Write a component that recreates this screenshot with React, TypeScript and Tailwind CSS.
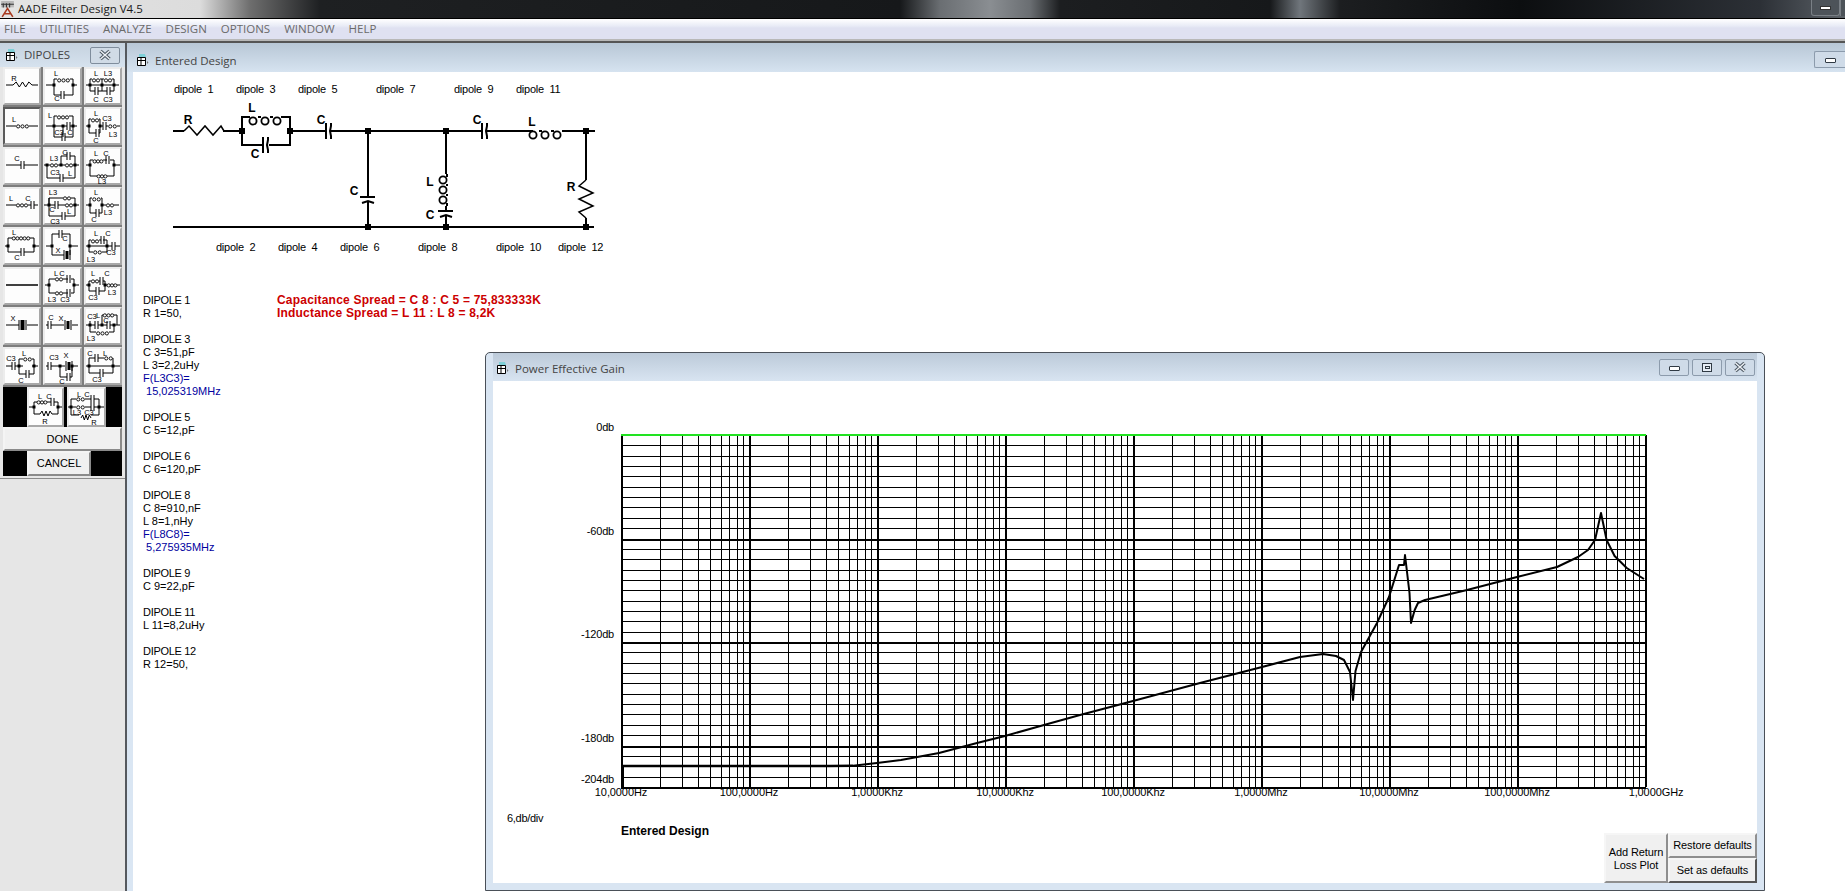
import React from 'react'

const UI = "font-['Open_Sans',sans-serif]"
const SYS = "font-['Liberation_Sans',Arial,sans-serif]"

/* palette symbol primitives, 38x38 box */
const W = ({ d, w = 1 }: { d: string; w?: number }) => <path d={d} fill="none" stroke="#000" strokeWidth={w} />
const Coil = ({ x, y, e }: { x: number; y: number; e: number }) => {
  const n = Math.max(2, Math.round((e - x) / 4))
  const s = (e - x) / n
  return (
    <>
      {Array.from({ length: n }, (_, i) => (
        <circle key={i} cx={x + s / 2 + i * s} cy={y + 1.4} r={1.6} fill="none" stroke="#000" strokeWidth={0.9} />
      ))}
    </>
  )
}
const Cap = ({ x, y }: { x: number; y: number }) => <W d={`M${x - 1} ${y - 4}V${y + 4}M${x + 2} ${y - 4}V${y + 4}`} />
const Dot = ({ x, y }: { x: number; y: number }) => <rect x={x - 1.5} y={y - 1.5} width={3} height={3} fill="#000" />
const Xtal = ({ x, y }: { x: number; y: number }) => (
  <>
    <W d={`M${x - 2} ${y - 5}V${y + 5}M${x + 4} ${y - 5}V${y + 5}`} />
    <rect x={x - 0.5} y={y - 4} width={3} height={8} fill="#000" />
  </>
)
const Zig = ({ x, y, e }: { x: number; y: number; e: number }) => {
  const s = (e - x) / 6
  return <W d={`M${x} ${y}l${s} -3l${s} 5l${s} -5l${s} 5l${s} -5l${s} 3`} />
}
const Lb = ({ x, y, t }: { x: number; y: number; t: string }) => (
  <text x={x} y={y} fontSize="7.5" textAnchor="middle" fontFamily="Liberation Sans" fill="#000">
    {t}
  </text>
)

const symbols: React.ReactNode[] = [
  <>
    <W d="M3 17H10" /><Zig x={10} y={17} e={29} /><W d="M29 17H35" /><Lb x={11} y={13} t="R" />
  </>,
  <>
    <W d="M3 17H11M30 17H34M11 11V27H18M21 27H30V11H27M11 11H14" /><Coil x={14} y={11} e={27} /><Cap x={19} y={27} /><Dot x={11} y={17} /><Dot x={30} y={17} /><Lb x={13} y={8} t="L" /><Lb x={14} y={33} t="C" />
  </>,
  <>
    <W d="M2 17H35M6 17V11H8M16 11H20M28 11H30V17M6 17V23H11M14 23H23M26 23H30V17M18 11V23" /><Coil x={8} y={11} e={16} /><Coil x={20} y={11} e={28} /><Cap x={12} y={23} /><Cap x={24} y={23} /><Dot x={6} y={17} /><Dot x={18} y={17} /><Dot x={30} y={17} /><Lb x={12} y={8} t="L" /><Lb x={24} y={8} t="L3" /><Lb x={12} y={34} t="C" /><Lb x={24} y={34} t="C3" />
  </>,
  <>
    <W d="M3 18H13M26 18H35" /><Coil x={13} y={17} e={26} /><Lb x={11} y={14} t="L" />
  </>,
  <>
    <W d="M3 18H24M27 18H34M11 8V29H19M22 29H30V8H26M11 8H14M20 18V29" /><Coil x={14} y={8} e={26} /><Cap x={25} y={18} /><Cap x={20} y={29} /><Dot x={11} y={18} /><Dot x={20} y={18} /><Dot x={30} y={18} /><Lb x={7} y={10} t="L" /><Lb x={16} y={27} t="C3" /><Lb x={27} y={27} t="C" />
  </>,
  <>
    <W d="M2 18H5M5 11V25H12M15 25H16V11M16 18H19M22 18H24M33 18H36M5 11H7M15 11H16" /><Coil x={7} y={11} e={15} /><Coil x={24} y={17} e={33} /><Cap x={13} y={25} /><Cap x={20} y={18} /><Dot x={5} y={18} /><Dot x={16} y={18} /><Lb x={12} y={8} t="L" /><Lb x={23} y={13} t="C3" /><Lb x={29} y={29} t="L3" /><Lb x={12} y={35} t="C" />
  </>,
  <>
    <W d="M3 17H18M21 17H35" /><Cap x={19} y={17} /><Lb x={14} y={13} t="C" />
  </>,
  <>
    <W d="M1 17H7M15 17H22M30 17H36M18 17V8H24M27 8H32V17M4 17V30H17M20 30H32V17" /><Coil x={7} y={16} e={15} /><Coil x={22} y={16} e={30} /><Cap x={25} y={8} /><Cap x={18} y={30} /><Dot x={4} y={17} /><Dot x={18} y={17} /><Dot x={32} y={17} /><Lb x={11} y={13} t="L3" /><Lb x={22} y={7} t="C" /><Lb x={12} y={27} t="C3" /><Lb x={27} y={28} t="L" />
  </>,
  <>
    <W d="M2 17H6M30 17H36M6 12V28H13M23 28H30V12H26M19 12H23M6 12H9" /><Coil x={9} y={12} e={19} /><Coil x={13} y={27} e={23} /><Cap x={23} y={12} /><Dot x={6} y={17} /><Dot x={30} y={17} /><Lb x={12} y={8} t="L" /><Lb x={22} y={8} t="C" /><Lb x={18} y={36} t="L3" />
  </>,
  <>
    <W d="M3 17H13M25 17H28M31 17H35" /><Coil x={13} y={16} e={25} /><Cap x={29} y={17} /><Lb x={8} y={13} t="L" /><Lb x={25} y={13} t="C" />
  </>,
  <>
    <W d="M1 17H12M15 17H22M30 17H36M6 10V28H19M22 28H32V10H28M6 10H20M6 17V10" /><Coil x={20} y={9} e={28} /><Coil x={22} y={16} e={30} /><Cap x={13} y={17} /><Cap x={20} y={28} /><Dot x={6} y={17} /><Dot x={32} y={17} /><Lb x={10} y={7} t="L3" /><Lb x={9} y={24} t="C" /><Lb x={26} y={26} t="L" /><Lb x={12} y={36} t="C3" />
  </>,
  <>
    <W d="M2 17H6M18 17H22M30 17H35M6 10V25H12M15 25H18V10H17M6 10H8" /><Coil x={8} y={10} e={17} /><Coil x={22} y={16} e={30} /><Cap x={13} y={25} /><Dot x={6} y={17} /><Dot x={18} y={17} /><Lb x={12} y={7} t="L" /><Lb x={24} y={27} t="L3" /><Lb x={10} y={34} t="C" />
  </>,
  <>
    <W d="M2 18H5M31 18H36M5 10V24H18M21 24H31V10H27M5 10H9" /><Coil x={9} y={9} e={27} /><Cap x={19} y={24} /><Dot x={5} y={18} /><Dot x={31} y={18} /><Lb x={11} y={7} t="L" /><Lb x={14} y={32} t="C" />
  </>,
  <>
    <W d="M3 18H9M27 18H35M9 6V27H21M27 27V6H19M16 6H9" /><Xtal x={23} y={27} /><Cap x={17} y={6} /><Dot x={9} y={18} /><Dot x={27} y={18} /><Lb x={22} y={13} t="C" /><Lb x={15} y={25} t="X" />
  </>,
  <>
    <W d="M2 18H28M31 18H36M5 12V24H9M18 24H23V12H19M5 12H7M15 12H17M23 18" /><Coil x={7} y={12} e={15} /><Coil x={9} y={23} e={18} /><Cap x={18} y={12} /><Cap x={29} y={18} /><Dot x={5} y={18} /><Dot x={23} y={18} /><Lb x={12} y={8} t="L" /><Lb x={24} y={8} t="C" /><Lb x={7} y={34} t="L3" /><Lb x={27} y={27} t="C3" />
  </>,
  <W d="M3 17H35" w={1.5} />,
  <>
    <W d="M2 17H6M31 17H36M6 11V25H12M20 25H25M28 25H31V11H28M25 11H20M12 11H6" /><Coil x={12} y={10} e={20} /><Coil x={12} y={24} e={20} /><Cap x={25} y={11} /><Cap x={25} y={25} /><Dot x={6} y={17} /><Dot x={31} y={17} /><Lb x={13} y={8} t="L" /><Lb x={19} y={8} t="C" /><Lb x={9} y={34} t="L3" /><Lb x={22} y={34} t="C3" />
  </>,
  <>
    <W d="M2 17H5M21 17H23M33 17H36M5 13V23H12M15 23H21V13H19M16 13H15M5 13H7" /><Coil x={7} y={12} e={15} /><Coil x={23} y={16} e={33} /><Cap x={17} y={13} /><Cap x={13} y={23} /><Dot x={5} y={17} /><Dot x={21} y={17} /><Lb x={9} y={8} t="L" /><Lb x={23} y={8} t="C" /><Lb x={28} y={27} t="L3" /><Lb x={9} y={32} t="C3" />
  </>,
  <>
    <W d="M3 17H16M24 17H35" /><rect x={17.5} y={12} width={4} height={10} fill="#000" /><W d="M16 12V22M23 12V22" /><Lb x={10} y={13} t="X" />
  </>,
  <>
    <W d="M3 17H5M8 17H21M29 17H35" /><Cap x={6} y={17} /><Xtal x={24} y={17} /><Lb x={8} y={12} t="C" /><Lb x={18} y={13} t="X" />
  </>,
  <>
    <W d="M2 17H11M14 17H23M26 17H36M6 17V24H12M25 24H30V17M18 17V7H19M30 7H33V17M6 17V13" /><Coil x={19} y={6} e={30} /><Coil x={12} y={24} e={25} /><Cap x={12} y={17} /><Cap x={24} y={17} /><Dot x={6} y={17} /><Dot x={18} y={17} /><Dot x={30} y={17} /><Lb x={14} y={10} t="L" /><Lb x={8} y={11} t="C3" /><Lb x={22} y={15} t="C" /><Lb x={7} y={33} t="L3" />
  </>,
  <>
    <W d="M3 18H9M12 18H20M29 18H35M16 18V11H20M29 11H31V18M16 18V26H23M26 26H31V18" /><Cap x={10} y={18} /><Coil x={20} y={10} e={29} /><Cap x={24} y={26} /><Dot x={16} y={18} /><Dot x={31} y={18} /><Lb x={8} y={13} t="C3" /><Lb x={21} y={8} t="L" /><Lb x={18} y={35} t="C" />
  </>,
  <>
    <W d="M3 18H5M8 18H22M29 18H35M17 18V29H24M27 29H29V18" /><Cap x={6} y={18} /><Xtal x={25} y={18} /><Cap x={25} y={29} /><Dot x={17} y={18} /><Dot x={29} y={18} /><Lb x={11} y={12} t="C3" /><Lb x={23} y={10} t="X" /><Lb x={19} y={36} t="C" />
  </>,
  <>
    <W d="M2 18H36M5 18V10H11M14 10H20M29 10H29V18M5 18V25H16M19 25H29V18" /><Cap x={12} y={10} /><Coil x={20} y={9} e={29} /><Cap x={17} y={25} /><Dot x={5} y={18} /><Dot x={29} y={18} /><Lb x={6} y={8} t="C" /><Lb x={21} y={8} t="L" /><Lb x={13} y={34} t="C3" />
  </>,
]

const lastRow: React.ReactNode[] = [
  <>
    <W d="M2 18H7M31 18H35M7 13V25H13M25 25H31V13H27M24 13H20M10 13H7" /><Coil x={10} y={12} e={20} /><Zig x={13} y={25} e={25} /><Cap x={25} y={13} /><Dot x={7} y={18} /><Dot x={31} y={18} /><Lb x={13} y={10} t="L" /><Lb x={22} y={10} t="C" /><Lb x={18} y={35} t="R" />
  </>,
  <>
    <W d="M1 18H4M32 18H37M4 10V26H12M24 26H32V10H27M4 10H9M18 10H24M4 18H9M18 18H24M27 18H32" /><Coil x={9} y={9} e={18} /><Coil x={9} y={17} e={18} /><Zig x={14} y={29} e={24} /><Cap x={25} y={10} /><Cap x={25} y={18} /><Dot x={4} y={18} /><Dot x={32} y={18} /><Lb x={12} y={8} t="L" /><Lb x={20} y={8} t="C" /><Lb x={10} y={26} t="L3" /><Lb x={22} y={26} t="C3" /><Lb x={27} y={36} t="R" />
  </>,
]

const WinIcon = () => (
  <svg viewBox="0 0 13 13" className="h-[13px] w-[13px] shrink-0">
    <path d="M3 0h6l1 3H3z" fill="#7fd0d8" />
    <path d="M1.5 3.5h8v8h-8zM1.5 6.5h8M5 3.5v8" fill="#fff" stroke="#000" strokeWidth="1" />
    <path d="M11 7l1.5 1.5L11 10z" fill="#777" />
  </svg>
)

const CloseX = () => (
  <svg viewBox="0 0 14 12" className="h-[12px] w-[14px]">
    <path d="M2.5 2l9 8M11.5 2l-9 8" stroke="#4a5560" strokeWidth="3.4" />
    <path d="M2.5 2l9 8M11.5 2l-9 8" stroke="#eef2f6" strokeWidth="1.4" />
  </svg>
)

const CapBtn = ({ kind }: { kind: 'min' | 'max' | 'close' }) => (
  <div className="flex h-[17px] w-[30px] items-center justify-center rounded-[2px] border border-[#8c9bac] bg-[#cfdbe8]">
    {kind === 'min' && <div className="mt-[3px] h-[5px] w-[11px] rounded-[1px] border border-[#303a44] bg-white" />}
    {kind === 'max' && (
      <div className="flex h-[9px] w-[10px] items-center justify-center border border-[#303a44] bg-[#e7eef6]">
        <div className="h-[3px] w-[5px] border border-[#303a44]" />
      </div>
    )}
    {kind === 'close' && <CloseX />}
  </div>
)

const menus = ['FILE', 'UTILITIES', 'ANALYZE', 'DESIGN', 'OPTIONS', 'WINDOW', 'HELP']

function Palette() {
  const raised = 'border-2 border-t-[#ececec] border-l-[#ececec] border-r-[#a8a8a8] border-b-[#a8a8a8] bg-[#fdfdfd]'
  return (
    <div className="flex w-[127px] shrink-0 flex-col rounded-tl-md border-r-2 border-[#55595e] bg-[#e6e6e6]">
      <div className="flex h-[24px] items-center bg-gradient-to-b from-[#c5d2df] to-[#d6e2ee] pr-[5px] pl-[5px]">
        <WinIcon />
        <span className={`${UI} ml-[6px] text-[11.5px] text-[#444]`}>DIPOLES</span>
        <div className="ml-auto flex h-[17px] w-[30px] items-center justify-center rounded-[2px] border border-[#7f8d9c] bg-[#d0dbe6]">
          <CloseX />
        </div>
      </div>
      <div className="ml-[3px] w-[119px] bg-[#7d7d7d]">
        <div className="grid grid-cols-3 gap-[2px] p-0">
          {symbols.map((s, i) => (
            <div
              key={i}
              className={`h-[38px] ${i === 3 ? 'border-2 border-t-[#5a5a5a] border-l-[#5a5a5a] border-r-[#a8a8a8] border-b-[#a8a8a8] bg-[#fdfdfd]' : raised}`}
            >
              <svg viewBox="2 1 34 34" className="block h-[34px] w-[34px] overflow-visible">
                {s}
              </svg>
            </div>
          ))}
        </div>
        <div className="mt-[2px] flex h-[40px] bg-black">
          <div className="w-[24px]" />
          <div className={`h-[40px] w-[37px] ${raised}`}>
            <svg viewBox="2 0 33 36" className="block h-[36px] w-[33px] overflow-visible">
              {lastRow[0]}
            </svg>
          </div>
          <div className="w-[3px]" />
          <div className={`h-[40px] w-[39px] ${raised}`}>
            <svg viewBox="2 0 35 36" className="block h-[36px] w-[35px] overflow-visible">
              {lastRow[1]}
            </svg>
          </div>
        </div>
        <div className={`${SYS} flex h-[24px] items-center justify-center border-2 border-t-[#f4f4f4] border-l-[#f4f4f4] border-r-[#8a8a8a] border-b-[#8a8a8a] bg-[#f0f0f0] text-[11px] text-black`}>
          DONE
        </div>
        <div className="flex h-[25px] bg-black">
          <div className="w-[24px]" />
          <div className={`${SYS} flex h-[25px] w-[64px] items-center justify-center border-2 border-t-[#f4f4f4] border-l-[#f4f4f4] border-r-[#8a8a8a] border-b-[#8a8a8a] bg-[#f0f0f0] text-[11px] text-black`}>
            CANCEL
          </div>
        </div>
      </div>
      <div className="mt-[2px] border-t border-[#8a8a8a]" />
    </div>
  )
}

const topLabels: [number, string][] = [[174, 'dipole  1'], [236, 'dipole  3'], [298, 'dipole  5'], [376, 'dipole  7'], [454, 'dipole  9'], [516, 'dipole  11']]
const botLabels: [number, string][] = [[216, 'dipole  2'], [278, 'dipole  4'], [340, 'dipole  6'], [418, 'dipole  8'], [496, 'dipole  10'], [558, 'dipole  12']]

const BigLb = ({ x, y, t }: { x: number; y: number; t: string }) => (
  <text x={x} y={y} fontSize="12" fontWeight="bold" textAnchor="middle" fontFamily="Liberation Sans" fill="#000">
    {t}
  </text>
)
const BigDot = ({ x, y }: { x: number; y: number }) => <rect x={x - 3} y={y - 3} width={6} height={6} fill="#000" />
const Loops = ({ xs, y }: { xs: number[]; y: number }) => (
  <>
    {xs.map((x) => (
      <circle key={x} cx={x} cy={y} r={3.6} fill="none" stroke="#000" strokeWidth={1.8} />
    ))}
  </>
)

function Circuit() {
  return (
    <svg viewBox="133 72 620 188" className="block h-[188px] w-[620px] shrink-0">
      {topLabels.map(([x, t]) => (
        <text key={x} x={x} y={93} fontSize="11" letterSpacing="-0.25" fontFamily="Liberation Sans" xmlSpace="preserve" fill="#000">
          {t}
        </text>
      ))}
      {botLabels.map(([x, t]) => (
        <text key={x} x={x} y={251} fontSize="11" letterSpacing="-0.25" fontFamily="Liberation Sans" xmlSpace="preserve" fill="#000">
          {t}
        </text>
      ))}
      <g fill="none" stroke="#000" strokeWidth="2">
        <path d="M173 131H184M223 131H242" />
        <path d="M184 131L189 126L197 135L205 126L213 135L221 126L224 131" strokeWidth="1.5" />
        <path d="M242 131V117H250M258 117H261M270 117H273M281 117H290V145H269M262 145H242V131" />
        <path d="M290 131H325M331 131H446M446 131H481M487 131H527M565 131H595" />
        <path d="M527 131H533M539 131H542M551 131H554M562 131H565" />
        <path d="M326 123V139M331 123V126L330 131L331 136V139" />
        <path d="M263 137V153M268 137V140L267 145L268 150V153" />
        <path d="M482 123V139M487 123V126L486 131L487 136V139" />
        <path d="M368 131V196M360 197H375M362 203L368 201L374 203M368 202V227" />
        <path d="M446 131V174M447 174V177M447 184V186M447 194V196M447 203V206M446 206V210M438 211H453M440 217L446 215L452 217M446 216V227" />
        <path d="M586 131V180M586 218V227" />
        <path d="M586 180L579 186L593 193L579 199L593 206L579 212L586 218" strokeWidth="1.5" />
        <path d="M173 227H594" />
      </g>
      <Loops xs={[253, 265, 277]} y={121} />
      <Loops xs={[533, 545, 557]} y={135} />
      <Loops xs={[443]} y={180} />
      <Loops xs={[443]} y={190} />
      <Loops xs={[443]} y={200} />
      <BigDot x={242} y={131} />
      <BigDot x={290} y={131} />
      <BigDot x={368} y={131} />
      <BigDot x={446} y={131} />
      <BigDot x={586} y={131} />
      <BigDot x={368} y={227} />
      <BigDot x={446} y={227} />
      <BigDot x={586} y={227} />
      <BigLb x={188} y={124} t="R" />
      <BigLb x={252} y={112} t="L" />
      <BigLb x={255} y={158} t="C" />
      <BigLb x={321} y={124} t="C" />
      <BigLb x={354} y={195} t="C" />
      <BigLb x={430} y={186} t="L" />
      <BigLb x={430} y={219} t="C" />
      <BigLb x={477} y={124} t="C" />
      <BigLb x={532} y={126} t="L" />
      <BigLb x={571} y={191} t="R" />
    </svg>
  )
}

type Row = { t: string; blue?: boolean } | null
const rows: Row[] = [
  { t: 'DIPOLE 1' }, { t: 'R 1=50,' }, null,
  { t: 'DIPOLE 3' }, { t: 'C 3=51,pF' }, { t: 'L 3=2,2uHy' }, { t: 'F(L3C3)=', blue: true }, { t: ' 15,025319MHz', blue: true }, null,
  { t: 'DIPOLE 5' }, { t: 'C 5=12,pF' }, null,
  { t: 'DIPOLE 6' }, { t: 'C 6=120,pF' }, null,
  { t: 'DIPOLE 8' }, { t: 'C 8=910,nF' }, { t: 'L 8=1,nHy' }, { t: 'F(L8C8)=', blue: true }, { t: ' 5,275935MHz', blue: true }, null,
  { t: 'DIPOLE 9' }, { t: 'C 9=22,pF' }, null,
  { t: 'DIPOLE 11' }, { t: 'L 11=8,2uHy' }, null,
  { t: 'DIPOLE 12' }, { t: 'R 12=50,' },
]

/* chart scales */
const X0 = 621
const DEC = 128
const Y0 = 435
const DB = 1.725

const curve = [
  [853, 765.7], [877, 763], [901, 760], [939, 753], [977, 743], [1005, 736], [1044, 725], [1080, 715], [1133, 701], [1200, 683], [1262, 667], [1300, 657], [1323, 654], [1336, 656], [1344, 660], [1350, 672], [1353, 700], [1355.5, 671], [1361, 652], [1377, 623], [1389, 597], [1399, 565], [1404, 565], [1405, 555], [1409.5, 593], [1411, 623], [1414.7, 610], [1418, 603], [1425, 600], [1467, 590], [1517, 577], [1557, 567], [1578, 557], [1588, 550], [1595, 540], [1601, 513], [1606.6, 540], [1614.6, 556], [1626.7, 568], [1644, 579],
]
const freqLabels = ['10,0000Hz', '100,0000Hz', '1,0000Khz', '10,0000Khz', '100,0000Khz', '1,0000Mhz', '10,0000Mhz', '100,0000Mhz', '1,0000GHz']
const dbLabels: [number, string][] = [[0, '0db'], [60, '-60db'], [120, '-120db'], [180, '-180db'], [204, '-204db']]

function Chart() {
  const verticals: { x: number; thick: boolean }[] = []
  for (let d = 0; d < 8; d++) {
    for (let m = 1; m < 10; m++) {
      verticals.push({ x: Math.round(X0 + d * DEC + DEC * Math.log10(m)), thick: m === 1 })
    }
  }
  verticals.push({ x: X0 + 8 * DEC, thick: true })
  const yb = Y0 + 204 * DB
  const hs: { y: number; thick: boolean }[] = []
  for (let k = 1; k <= 34; k++) {
    hs.push({ y: Math.round(Y0 + k * 6 * DB), thick: k % 10 === 0 || k === 34 })
  }
  return (
    <svg viewBox="493 381 1264 430" className="block h-[430px] w-[1264px] shrink-0">
      <g shapeRendering="crispEdges">
        {verticals.map((v) => (
          <line key={v.x} x1={v.x + 0.5} x2={v.x + 0.5} y1={Y0} y2={yb} stroke="#000" strokeWidth={v.thick ? 2 : 1} />
        ))}
        {hs.map((h) => (
          <line key={h.y} x1={X0} x2={X0 + 8 * DEC + 1} y1={h.y + 0.5} y2={h.y + 0.5} stroke="#000" strokeWidth={h.thick ? 2 : 1} />
        ))}
        <line x1={X0} x2={X0 + 8 * DEC + 1} y1={Y0} y2={Y0} stroke="#22e322" strokeWidth={2} />
        <rect x={X0} y={766} width={3} height={21} fill="#000" />
      </g>
      <path d="M621 766H830L853 765.7" fill="none" stroke="#000" strokeWidth="2.6" />
      <polyline points={curve.map((p) => p.join(',')).join(' ')} fill="none" stroke="#000" strokeWidth="2" strokeLinejoin="round" />
      {dbLabels.map(([d, t]) => (
        <text key={d} x={614} y={Y0 - 4 + d * DB} fontSize="11" letterSpacing="-0.2" textAnchor="end" fontFamily="Liberation Sans" fill="#000">
          {t}
        </text>
      ))}
      {freqLabels.map((t, i) => (
        <text key={t} x={X0 + i * DEC + (i === 8 ? 11 : 0)} y={796} fontSize="11" letterSpacing="-0.1" textAnchor="middle" fontFamily="Liberation Sans" fill="#000">
          {t}
        </text>
      ))}
    </svg>
  )
}

function ChartWindow() {
  const btn = 'flex items-center justify-center text-center border-2 border-t-[#f6f6f6] border-l-[#f6f6f6] border-r-[#8f8f8f] border-b-[#8f8f8f] bg-[#f0f0f0]'
  return (
    <div className="absolute top-[352px] left-[485px] flex h-[539px] w-[1280px] flex-col rounded-t-[5px] border border-[#4a5058] bg-[#d9e5f2] px-[7px] pb-[7px]">
      <div className="flex h-[28px] shrink-0 items-center bg-gradient-to-b from-[#bccad9] to-[#d8e4f1] pt-[3px] pl-[3px]">
        <WinIcon />
        <span className={`${UI} ml-[6px] text-[11.5px] text-[#444]`}>Power Effective Gain</span>
        <div className="-mt-[3px] ml-auto flex gap-[3px] pr-[2px]">
          <CapBtn kind="min" />
          <CapBtn kind="max" />
          <CapBtn kind="close" />
        </div>
      </div>
      <div className={`${SYS} flex min-h-0 flex-1 flex-col bg-white text-[11px] leading-[13px] text-black`}>
        <Chart />
        <div className="flex flex-1">
          <div className="flex flex-col pt-[1px]">
            <div className="pl-[14px] tracking-[-0.3px]">6,db/div</div>
            <div className="pl-[128px] text-[12px] font-bold">Entered Design</div>
          </div>
          <div className="mt-auto ml-auto flex h-[50px] w-[153px] items-stretch tracking-[-0.1px]">
            <div className={`${btn} w-[64px] pt-[2px] leading-[13px]`}>Add Return<br />Loss Plot</div>
            <div className="flex flex-1 flex-col">
              <div className={`${btn} h-[25px]`}>Restore defaults</div>
              <div className={`${btn} h-[25px] border-r-[#555] border-b-[#555]`}>Set as defaults</div>
            </div>
          </div>
        </div>
      </div>
    </div>
  )
}

export default function App() {
  return (
    <div className="relative flex h-[891px] w-[1845px] flex-col overflow-hidden bg-white">
      {/* title bar */}
      <div className="flex h-[18px] shrink-0 items-center bg-[linear-gradient(90deg,#e4e4e4_0px,#dcdcdc_200px,#6e6e6e_250px,#1e2022_320px,#16181a_900px,#6a6e72_940px,#8a8e92_990px,#6a6e72_1030px,#1c1e20_1060px,#16181a_1270px,#70767c_1300px,#1c1e20_1340px,#0c0e10_1520px,#2c3036_1760px,#5c6268_1845px)]">
        <svg viewBox="0 0 12 16" className="ml-[1px] h-[17px] w-[13px] shrink-0">
          <path d="M0 0h12v6H0z" fill="#b8b8b8" />
          <path d="M2 2v4M5 2v4M8 2v4M0 3h12" stroke="#333" strokeWidth="1" />
          <path d="M1 15L6 7l5 8M3 12h6" fill="none" stroke="#a83a20" strokeWidth="1.5" />
        </svg>
        <span className={`${UI} ml-[4px] text-[11.5px] text-[#1a1a1a]`}>AADE Filter Design V4.5</span>
        <div className="ml-auto flex items-start self-start">
          <div className="flex h-[16px] w-[29px] items-center justify-center rounded-b-[3px] border-x border-b border-[#7a8086] bg-[#4d5359]">
            <div className="h-[4px] w-[11px] border border-[#333] bg-white" />
          </div>
          <div className="h-[16px] w-[5px] border-l border-[#7a8086] bg-[#4d5359]" />
        </div>
      </div>
      <div className="h-[1px] shrink-0 bg-black" />
      {/* menu */}
      <div className={`${UI} flex h-[20px] shrink-0 items-center gap-[14px] bg-[linear-gradient(180deg,#ffffff_0%,#e8ebf6_35%,#dfe1f1_45%,#dfe1f1_100%)] pl-[4px] text-[11.5px] text-[#6a6a6a]`}>
        {menus.map((m) => (
          <span key={m}>{m}</span>
        ))}
      </div>
      <div className="h-[2px] shrink-0 bg-[#b8b8b8]" />
      <div className="h-[2px] shrink-0 bg-[#555]" />
      {/* workspace */}
      <div className="flex min-h-0 flex-1">
        <Palette />
        <div className="flex min-w-0 flex-1 flex-col">
          <div className="flex h-[29px] shrink-0 items-center bg-gradient-to-b from-[#b8c7d6] to-[#d6e3f0] pt-[6px] pl-[9px]">
            <WinIcon />
            <span className={`${UI} ml-[6px] text-[11.5px] text-[#444]`}>Entered Design</span>
            <div className="-mt-[3px] ml-auto flex h-[17px] w-[31px] items-center justify-center rounded-l-[2px] border border-r-0 border-[#8c9bac] bg-[#cfdbe8]">
              <div className="mt-[3px] h-[5px] w-[11px] rounded-[1px] border border-[#303a44] bg-white" />
            </div>
          </div>
          <div className="flex min-h-0 flex-1">
            <div className="w-[6px] shrink-0 bg-[#dae6f3]" />
            <div className={`${SYS} flex min-w-0 flex-1 flex-col bg-white text-[11px] leading-[13px] text-black`}>
              <Circuit />
              <div className="mt-[34px] flex pl-[10px]">
                <div className="w-[134px]">
                  {rows.map((r, i) => (
                    <div
                      key={i}
                      className={`h-[13px] whitespace-pre ${r?.blue ? 'text-[#0000a0]' : ''} ${r?.t.startsWith('DIPOLE') ? 'tracking-[-0.3px]' : ''}`}
                    >
                      {r ? r.t : ''}
                    </div>
                  ))}
                </div>
                <div className="text-[12px] font-bold tracking-[0.2px] text-[#cc0000]">
                  <div>Capacitance Spread = C 8 : C 5 = 75,833333K</div>
                  <div>Inductance Spread = L 11 : L 8 = 8,2K</div>
                </div>
              </div>
            </div>
          </div>
        </div>
      </div>
      <ChartWindow />
    </div>
  )
}
